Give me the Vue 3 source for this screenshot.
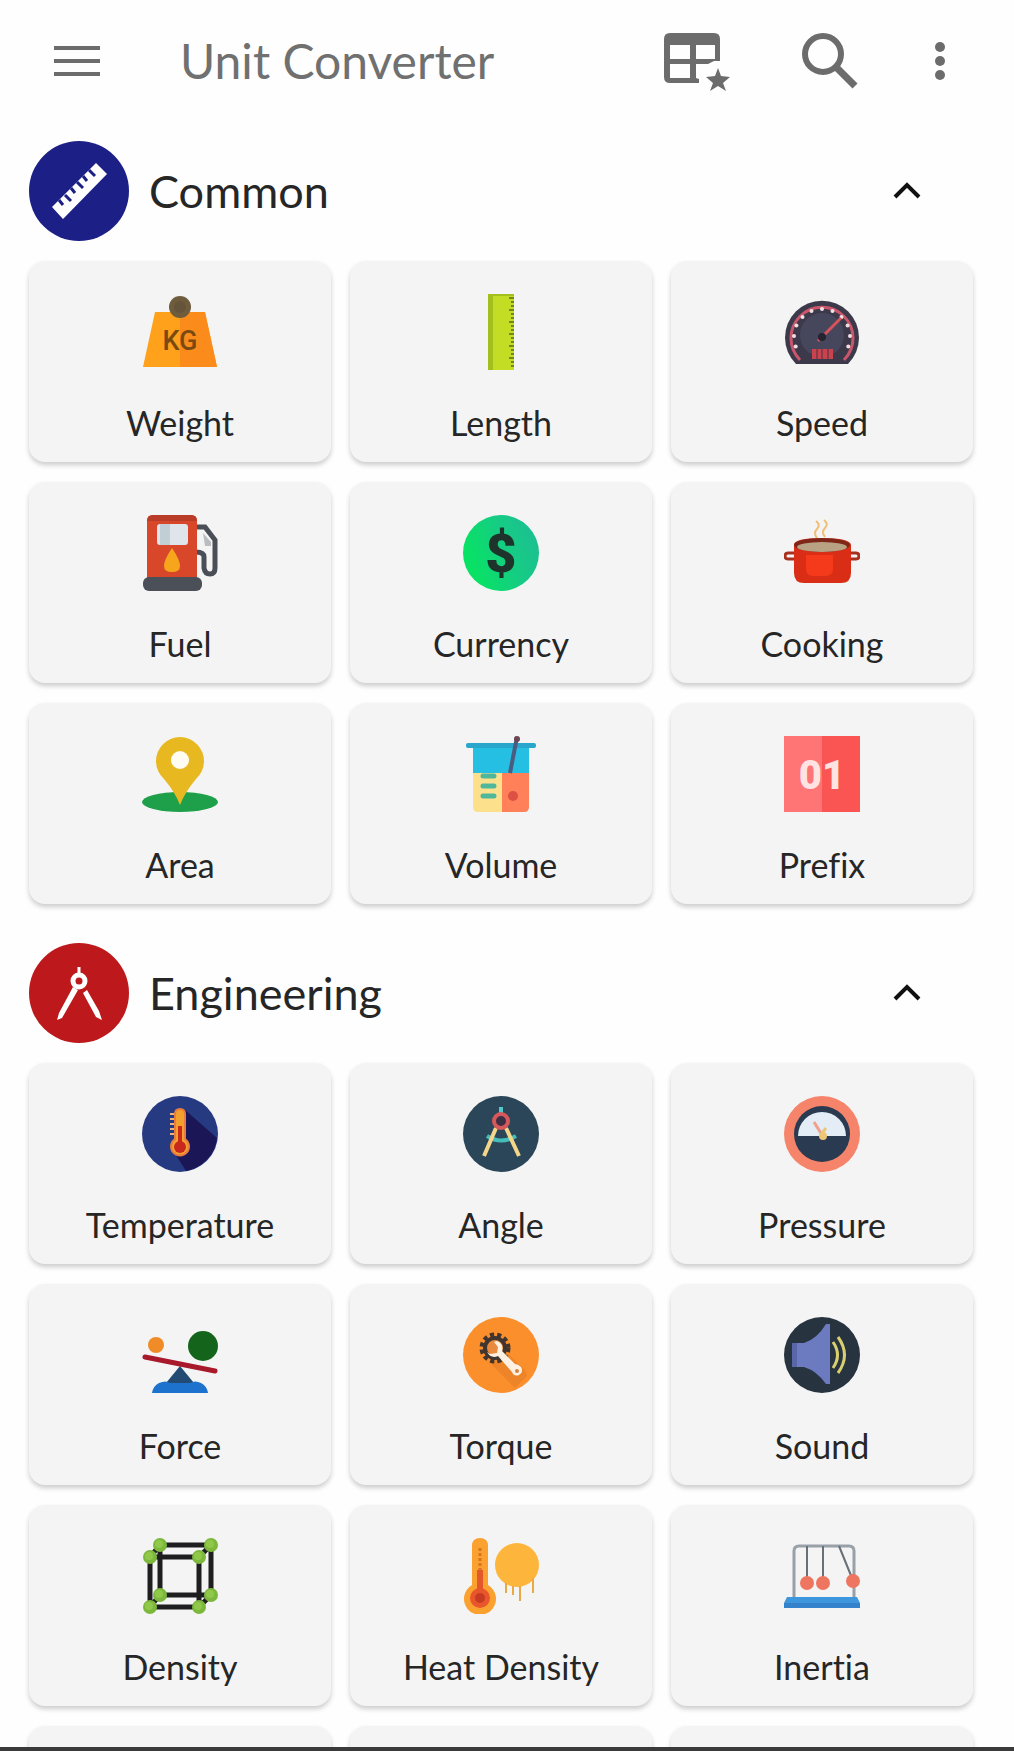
<script setup>
import { ref } from 'vue'

const ticks = (n, fn) => Array.from({ length: n }, (_, i) => fn(i)).join('')

const icons = {
  weight: `
    <path d="M13 18h50l12 55H1z" fill="#ffa11a"/><path d="M38 18h25l12 55H38z" fill="#fb8c1c"/>
    <circle cx="38" cy="13" r="11" fill="#6e5c3c"/><circle cx="38" cy="13" r="6" fill="#65543a"/>
    <text x="38" y="56" text-anchor="middle" font-family="Roboto, sans-serif" font-size="27" font-weight="500" fill="#7a4a12">KG</text>`,
  length: `
    <path d="M25 0h26v76H25z" fill="#c3dc24"/><path d="M25 0h5v76h-5z" fill="#a3bf1e"/><path d="M25 0h26v2H25z" fill="#a3bf1e"/>
    ${ticks(18, i => `<path d="M${i % 3 ? 48 : 46} ${4 + i * 4}H51" stroke="#6f8a14" stroke-width="2"/>`)}`,
  speed: `
    <path d="M12 70a37 37 0 1 1 52 0z" fill="#3c3a4a"/>
    <path d="M16 66a31 31 0 1 1 44 0" fill="none" stroke="#c9566a" stroke-width="3"/>
    <circle cx="38" cy="41" r="22" fill="#46465c"/>
    ${ticks(11, i => {
      const a = (200 - i * 22) * Math.PI / 180
      return `<circle cx="${(38 + 28 * Math.cos(a)).toFixed(1)}" cy="${(43 - 28 * Math.sin(a)).toFixed(1)}" r="2" fill="#f2dfe4"/>`
    })}
    <path d="M34 47L57 24" stroke="#d8525c" stroke-width="3"/><circle cx="38" cy="43" r="4" fill="#25232f"/>
    <path d="M28 55h21v10H28z" fill="#c9434f"/><path d="M33 55v10M38 55v10M44 55v10" stroke="#4b3040"/>`,
  fuel: `
    <path d="M54 12h9l10 13v28q0 6-5 6t-6-6V42q0-5-8-5" fill="none" stroke="#4a4f57" stroke-width="5"/>
    <path d="M61 18l8 9v4h-6z" fill="#b9bdc1"/>
    <path d="M5 64V6q0-6 6-6h38q6 0 6 6v58z" fill="#d9472a"/><path d="M5 6q0-6 6-6h38q6 0 6 6z" fill="#b93c28"/>
    <rect x="15" y="9" width="31" height="21" rx="3" fill="#dfe5ea"/><path d="M18 9h10v21H18z" fill="#c2ced6"/>
    <path d="M30 33q16 24 0 24t0-24" fill="#f7a51c"/>
    <rect x="1" y="62" width="59" height="14" rx="6" fill="#4b5058"/>`,
  currency: `
    <linearGradient id="coin" x1="0" y1="0.7" x2="1" y2="0.3"><stop offset="0.1" stop-color="#08e264"/><stop offset="0.6" stop-color="#16cc84"/><stop offset="1" stop-color="#1cbf92"/></linearGradient>
    <circle cx="38" cy="38" r="38" fill="url(#coin)"/>
    <text x="38" y="57" text-anchor="middle" font-family="Roboto, sans-serif" font-size="54" font-weight="900" fill="#1d332c">$</text>`,
  cooking: `
    <path d="M33 23q-4-5 0-9t-1-8M41 22q-4-5 0-9t-1-8" fill="none" stroke="#efbf76" stroke-width="2"/>
    <path d="M12 38H4q-3 0-3 3t3 3h8M64 38h8q3 0 3 3t-3 3h-8" fill="none" stroke="#a8301f" stroke-width="3"/>
    <path d="M10 30q0-7 28-7t29 7v28q0 10-10 10H20q-10 0-10-10z" fill="#d92d15"/>
    <ellipse cx="38" cy="30" rx="28" ry="7" fill="#7e2618"/><ellipse cx="38" cy="32" rx="25" ry="5" fill="#b9a184"/>
    <path d="M22 40h27v14q0 7-7 7H29q-7 0-7-7z" fill="#f53a1c"/>`,
  area: `
    <ellipse cx="38" cy="66" rx="38" ry="10" fill="#1ea04a"/>
    <path d="M38 69Q33 56 22 43A24 24 0 1 1 54 43Q43 56 38 69z" fill="#e8b820"/>
    <circle cx="38" cy="24" r="9" fill="#fffdf2"/>`,
  volume: `
    <path d="M10 9h56v29H10z" fill="#25bfe4"/><rect x="3" y="7" width="70" height="5" rx="2" fill="#2aa5cc"/>
    <path d="M10 37h29v39H15q-5 0-5-5z" fill="#fce08c"/><path d="M39 37h27v34q0 5-5 5H39z" fill="#ff8059"/>
    <path d="M54 1L47 37" stroke="#4c5b80" stroke-width="4"/><circle cx="54" cy="3" r="3" fill="#6b4656"/>
    <path d="M20 40h11M20 50h11M20 60h11" stroke="#4fb89c" stroke-width="5" stroke-linecap="round"/>
    <circle cx="50" cy="60" r="5" fill="#dd5145"/>`,
  prefix: `
    <path d="M0 0h76v76H0z" fill="#fb5553"/><path d="M0 0h38v76H0z" fill="#ff7474"/>
    <text x="38" y="53" text-anchor="middle" font-family="Roboto, sans-serif" font-size="40" font-weight="900" fill="#ffe3e3">01</text>`,
  temperature: `
    <circle cx="38" cy="38" r="38" fill="#263a82"/><path d="M42 13L75 42A38 38 0 0 1 44 75L32 56z" fill="#1b1656"/>
    <path d="M28 18h5M28 23h5M28 28h5M28 33h5M28 38h5" stroke="#e9b27a" stroke-width="2"/>
    <path d="M33 43V18q0-5 5-5t5 5v25a9 9 0 1 1-10 0z" fill="#f3a02d" stroke="#e87b41" stroke-width="2"/>
    <path d="M38 30v20" stroke="#c8281e" stroke-width="4"/><circle cx="38" cy="51" r="6" fill="#c8281e"/>`,
  angle: `
    <circle cx="38" cy="38" r="38" fill="#2b4658"/>
    <path d="M38 11v7" stroke="#52c8c8" stroke-width="4"/>
    <path d="M24 40q14 9 29 0" fill="none" stroke="#46bdb8" stroke-width="4"/>
    <path d="M33 32L21 60M43 32L56 60" stroke="#f3d68a" stroke-width="4"/>
    <circle cx="38" cy="25" r="7" fill="#3b2f45" stroke="#d6585a" stroke-width="4"/>`,
  pressure: `
    <circle cx="38" cy="38" r="38" fill="#f5846b"/><circle cx="38" cy="38" r="28" fill="#2a3a50"/>
    <path d="M14 40a24 24 0 0 1 48 0z" fill="#e4edf6"/>
    <path d="M30 26L38 39" stroke="#f0a08c" stroke-width="3"/><path d="M38 37l4-5" stroke="#e7c879" stroke-width="3"/>
    <circle cx="39" cy="40" r="4" fill="#efc676"/>`,
  force: `
    <circle cx="14" cy="28" r="8" fill="#f08c28"/><circle cx="61" cy="29" r="15" fill="#14641c"/>
    <path d="M38 49L52 66H24z" fill="#234a72"/>
    <path d="M10 76q1-7 7-10 7-3 11 0h20q5-3 11 0 6 3 7 10z" fill="#1c72cc"/>
    <path d="M3 40L73 54" stroke="#a8192c" stroke-width="5" stroke-linecap="round"/>`,
  torque: `
    <circle cx="38" cy="38" r="38" fill="#fb8f2b"/><path d="M42 34l20 19 2 6-12 12-24-24z" fill="#e07a26" opacity=".5"/>
    <circle cx="32" cy="31" r="13" fill="none" stroke="#40352f" stroke-width="5" stroke-dasharray="4 3"/>
    <circle cx="32" cy="31" r="10" fill="#e98a3c" stroke="#40352f" stroke-width="4"/>
    <path d="M24 35q4 7 11 4l14 16q2 5 7 3 5-3 2-8-3-3-6-3L39 34q2-7-5-10l-3 1 4 5-1 6-7 1z" fill="#fff0e4"/>
    <circle cx="54" cy="54" r="2" fill="#d8843e"/>`,
  sound: `
    <circle cx="38" cy="38" r="38" fill="#27333f"/>
    <path d="M8 26h12Q33 22 42 7h4v60h-4Q33 54 20 50H8z" fill="#6c7bc0"/><path d="M8 26h5v24H8z" fill="#5967a8"/>
    <path d="M49 25q9 13 0 26M54 20q13 18 0 36" fill="none" stroke="#d9cf70" stroke-width="3"/>`,
  density: `
    <path d="M18 7h51v50H18zM8 19h49v50H8zM18 7L8 19M69 7L57 19M18 57L8 69M69 57L57 69" fill="none" stroke="#1e1e20" stroke-width="5"/>
    ${[[18, 7], [69, 7], [8, 19], [57, 19], [18, 57], [69, 57], [8, 69], [57, 69]]
      .map(([x, y]) => `<circle cx="${x}" cy="${y}" r="7" fill="#7cb83c"/><circle cx="${x - 1}" cy="${y - 1}" r="4" fill="#90c84a"/>`).join('')}`,
  heat: `
    <path d="M9 47V8q0-8 8-8t8 8v39a16 16 0 1 1-16 0z" fill="#faa12f"/>
    <path d="M17 10v22" stroke="#d87324" stroke-width="3" stroke-dasharray="3 2"/>
    <path d="M17 32v26" stroke="#e4572a" stroke-width="6"/><circle cx="17" cy="60" r="10" fill="#e8562b"/><circle cx="17" cy="60" r="5" fill="#c93a22"/>
    <circle cx="54" cy="27" r="22" fill="#fdb53c"/>
    <path d="M43 45v10M50 48v9M57 48v15M70 40v15" stroke="#e9a944" stroke-width="2"/>`,
  inertia: `
    <path d="M10 60V13q0-5 5-5h50q5 0 5 5v47" fill="none" stroke="#98a0a8" stroke-width="3"/>
    <path d="M23 8v34M39 8v34M55 8l13 32" stroke="#687078" stroke-width="2"/>
    <circle cx="23" cy="45" r="7" fill="#ee7560"/><circle cx="39" cy="45" r="7" fill="#ee7560"/><circle cx="69" cy="43" r="7" fill="#ee7560"/>
    <path d="M3 59h70l3 6v5H0v-5z" fill="#3e96dc"/><path d="M0 65h76v5H0z" fill="#3482cc"/>`
}

const badges = {
  ruler: `
    <path d="M67 22L78 33 34 78 23 66z" fill="#fff"/>
    <path d="M30 59l4 5M36 54l6 6M42 47l4 5M48 41l6 6M54 35l4 5M60 29l6 6" stroke="#1b1f86" stroke-width="3"/>`,
  compass: `
    <path d="M50 24v8" stroke="#fff" stroke-width="3"/><circle cx="50" cy="38" r="6" fill="none" stroke="#fff" stroke-width="5"/>
    <path d="M44 44l5 3-16 28-5 2 2-7zM54 50l4-3 12 21 3 9-6-3z" fill="#fff"/>`
}

const sections = ref([
  {
    name: 'Common', badge: 'ruler', tone: 'navy', open: true,
    items: [
      ['Weight', 'weight'], ['Length', 'length'], ['Speed', 'speed'],
      ['Fuel', 'fuel'], ['Currency', 'currency'], ['Cooking', 'cooking'],
      ['Area', 'area'], ['Volume', 'volume'], ['Prefix', 'prefix']
    ]
  },
  {
    name: 'Engineering', badge: 'compass', tone: 'red', open: true,
    items: [
      ['Temperature', 'temperature'], ['Angle', 'angle'], ['Pressure', 'pressure'],
      ['Force', 'force'], ['Torque', 'torque'], ['Sound', 'sound'],
      ['Density', 'density'], ['Heat Density', 'heat'], ['Inertia', 'inertia'],
      ['', ''], ['', ''], ['', '']
    ]
  }
])
</script>

<template>
  <div class="screen">
    <header class="bar">
      <button class="tool" aria-label="Menu">
        <svg width="46" height="32" viewBox="0 0 46 32"><path d="M0 3h46M0 16h46M0 29h46" stroke="#6c6c6c" stroke-width="4" /></svg>
      </button>
      <h1>Unit Converter</h1>
      <button class="tool" aria-label="Favourites">
        <svg width="66" height="60" viewBox="0 0 66 60">
          <path fill-rule="evenodd" fill="#6c6c6c" d="M6 2H50q6 0 6 6V30H50L44 33H32V47L35 48V52H6Q0 52 0 46V8Q0 2 6 2zM6 14V28H26V14zM32 14V28H51V14zM6 33V47H26V33z" />
          <path fill="#6c6c6c" d="M54 37l3 8 9 1-7 6 3 8-8-5-8 5 3-8-7-6 9-1z" />
        </svg>
      </button>
      <button class="tool" aria-label="Search">
        <svg width="56" height="56" viewBox="0 0 56 56"><circle cx="21" cy="21" r="18" fill="none" stroke="#6c6c6c" stroke-width="6" /><path d="M34 34L53 53" stroke="#6c6c6c" stroke-width="7" /></svg>
      </button>
      <button class="tool" aria-label="More options">
        <svg width="12" height="40" viewBox="0 0 12 40" fill="#6c6c6c"><circle cx="6" cy="6" r="5" /><circle cx="6" cy="20" r="5" /><circle cx="6" cy="34" r="5" /></svg>
      </button>
    </header>

    <main>
      <section v-for="s in sections" :key="s.name">
        <button class="heading" :aria-expanded="s.open" @click="s.open = !s.open">
          <svg class="badge" :class="s.tone" viewBox="0 0 100 100" v-html="badges[s.badge]"></svg>
          <span class="name">{{ s.name }}</span>
          <svg class="chevron" :class="{ closed: !s.open }" width="28" height="18" viewBox="0 0 28 18"><path d="M2 15L14 3l12 12" fill="none" stroke="#111" stroke-width="4" /></svg>
        </button>
        <div v-if="s.open" class="grid">
          <button v-for="([label, icon], i) in s.items" :key="i" class="card">
            <svg class="icon" viewBox="0 0 76 76" v-html="icons[icon]"></svg>
            <span>{{ label }}</span>
          </button>
        </div>
      </section>
    </main>
    <div class="edge"></div>
  </div>
</template>

<style>
body {
  background: #fefefe;
}
</style>

<style scoped>
.screen {
  display: flex;
  flex-direction: column;
  height: 100vh;
  font-family: Lato, "Open Sans", sans-serif;
  font-variant-ligatures: none;
  color: #262626;
}
button {
  margin: 0;
  padding: 0;
  border: 0;
  background: none;
  color: inherit;
  font: inherit;
  cursor: pointer;
}
svg {
  display: block;
}
.bar {
  display: flex;
  flex: none;
  align-items: center;
  height: 122px;
  padding: 0 68px 0 54px;
}
h1 {
  flex: 1;
  margin: 0 0 0 80px;
  font-size: 48px;
  font-weight: 400;
  line-height: 60px;
  color: #707070;
}
.tool + .tool {
  margin-left: 72px;
}
.tool:last-child {
  margin-left: 76px;
}
main {
  flex: 1;
  min-height: 0;
  padding: 19px 41px 0 29px;
  overflow-y: auto;
  scrollbar-width: none;
}
section + section {
  margin-top: 39px;
}
.heading {
  display: flex;
  align-items: center;
  width: 100%;
  padding-right: 52px;
  text-align: left;
}
.badge {
  width: 100px;
  height: 100px;
  border-radius: 50%;
}
.navy {
  background: #1b1f86;
}
.red {
  background: #bd191c;
}
.name {
  flex: 1;
  margin-left: 20px;
  font-size: 45px;
  line-height: 52px;
}
.closed {
  transform: rotate(180deg);
}
.grid {
  display: grid;
  grid-template-columns: repeat(3, 1fr);
  gap: 20px 19px;
  margin-top: 20px;
}
.card {
  display: flex;
  flex-direction: column;
  align-items: center;
  height: 201px;
  padding-top: 33px;
  border-radius: 16px;
  background: #f4f4f4;
  box-shadow: 0 3px 5px rgba(0, 0, 0, 0.2);
  font-size: 34px;
  line-height: 40px;
}
.icon {
  width: 76px;
  height: 76px;
  margin-bottom: 33px;
}
.edge {
  flex: none;
  height: 4px;
  background: #3a3a3a;
}
</style>
